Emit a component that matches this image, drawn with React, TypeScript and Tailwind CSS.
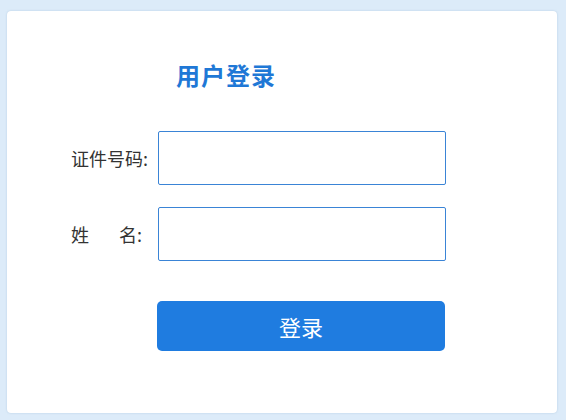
import { useState } from 'react'

export default function App() {
  const [idNo, setIdNo] = useState('')
  const [name, setName] = useState('')

  return (
    <div
      className="w-[566px] h-[420px] bg-[#dcebf9] pt-[11px] pl-[7px] pr-[9px] pb-[7px]"
      style={{ fontFamily: '"Noto Sans CJK SC", "Noto Sans", sans-serif' }}
    >
      <div className="flex h-full flex-col rounded-[4px] bg-white shadow-[0_0_2px_rgba(150,180,210,0.6)]">
        {/* Title */}
        <div className="ml-[169px] mt-[47px] h-[34px] text-[24px] leading-[34px] font-bold tracking-[1px] text-[#1f78d6]">
          用户登录
        </div>

        {/* ID number */}
        <div className="mt-[39px] flex items-center">
          <label className="ml-[64px] mr-[7px] w-[80px] text-[18px] text-[#333]">
            证件号码:
          </label>
          <input
            value={idNo}
            onChange={(e) => setIdNo(e.target.value)}
            className="h-[54px] w-[288px] rounded-[2px] border border-[#3a84d6] px-2 text-[16px] outline-none"
          />
        </div>

        {/* Name */}
        <div className="mt-[22px] flex items-center">
          <label className="ml-[64px] mr-[7px] flex w-[80px] text-[18px] text-[#333]">
            <span>姓</span>
            <span className="ml-[30px]">名:</span>
          </label>
          <input
            value={name}
            onChange={(e) => setName(e.target.value)}
            className="h-[54px] w-[288px] rounded-[2px] border border-[#3a84d6] px-2 text-[16px] outline-none"
          />
        </div>

        <button className="ml-[150px] mt-[40px] h-[50px] w-[288px] rounded-[5px] bg-[#1f7ce0] text-[22px] text-white">
          登录
        </button>
      </div>
    </div>
  )
}
